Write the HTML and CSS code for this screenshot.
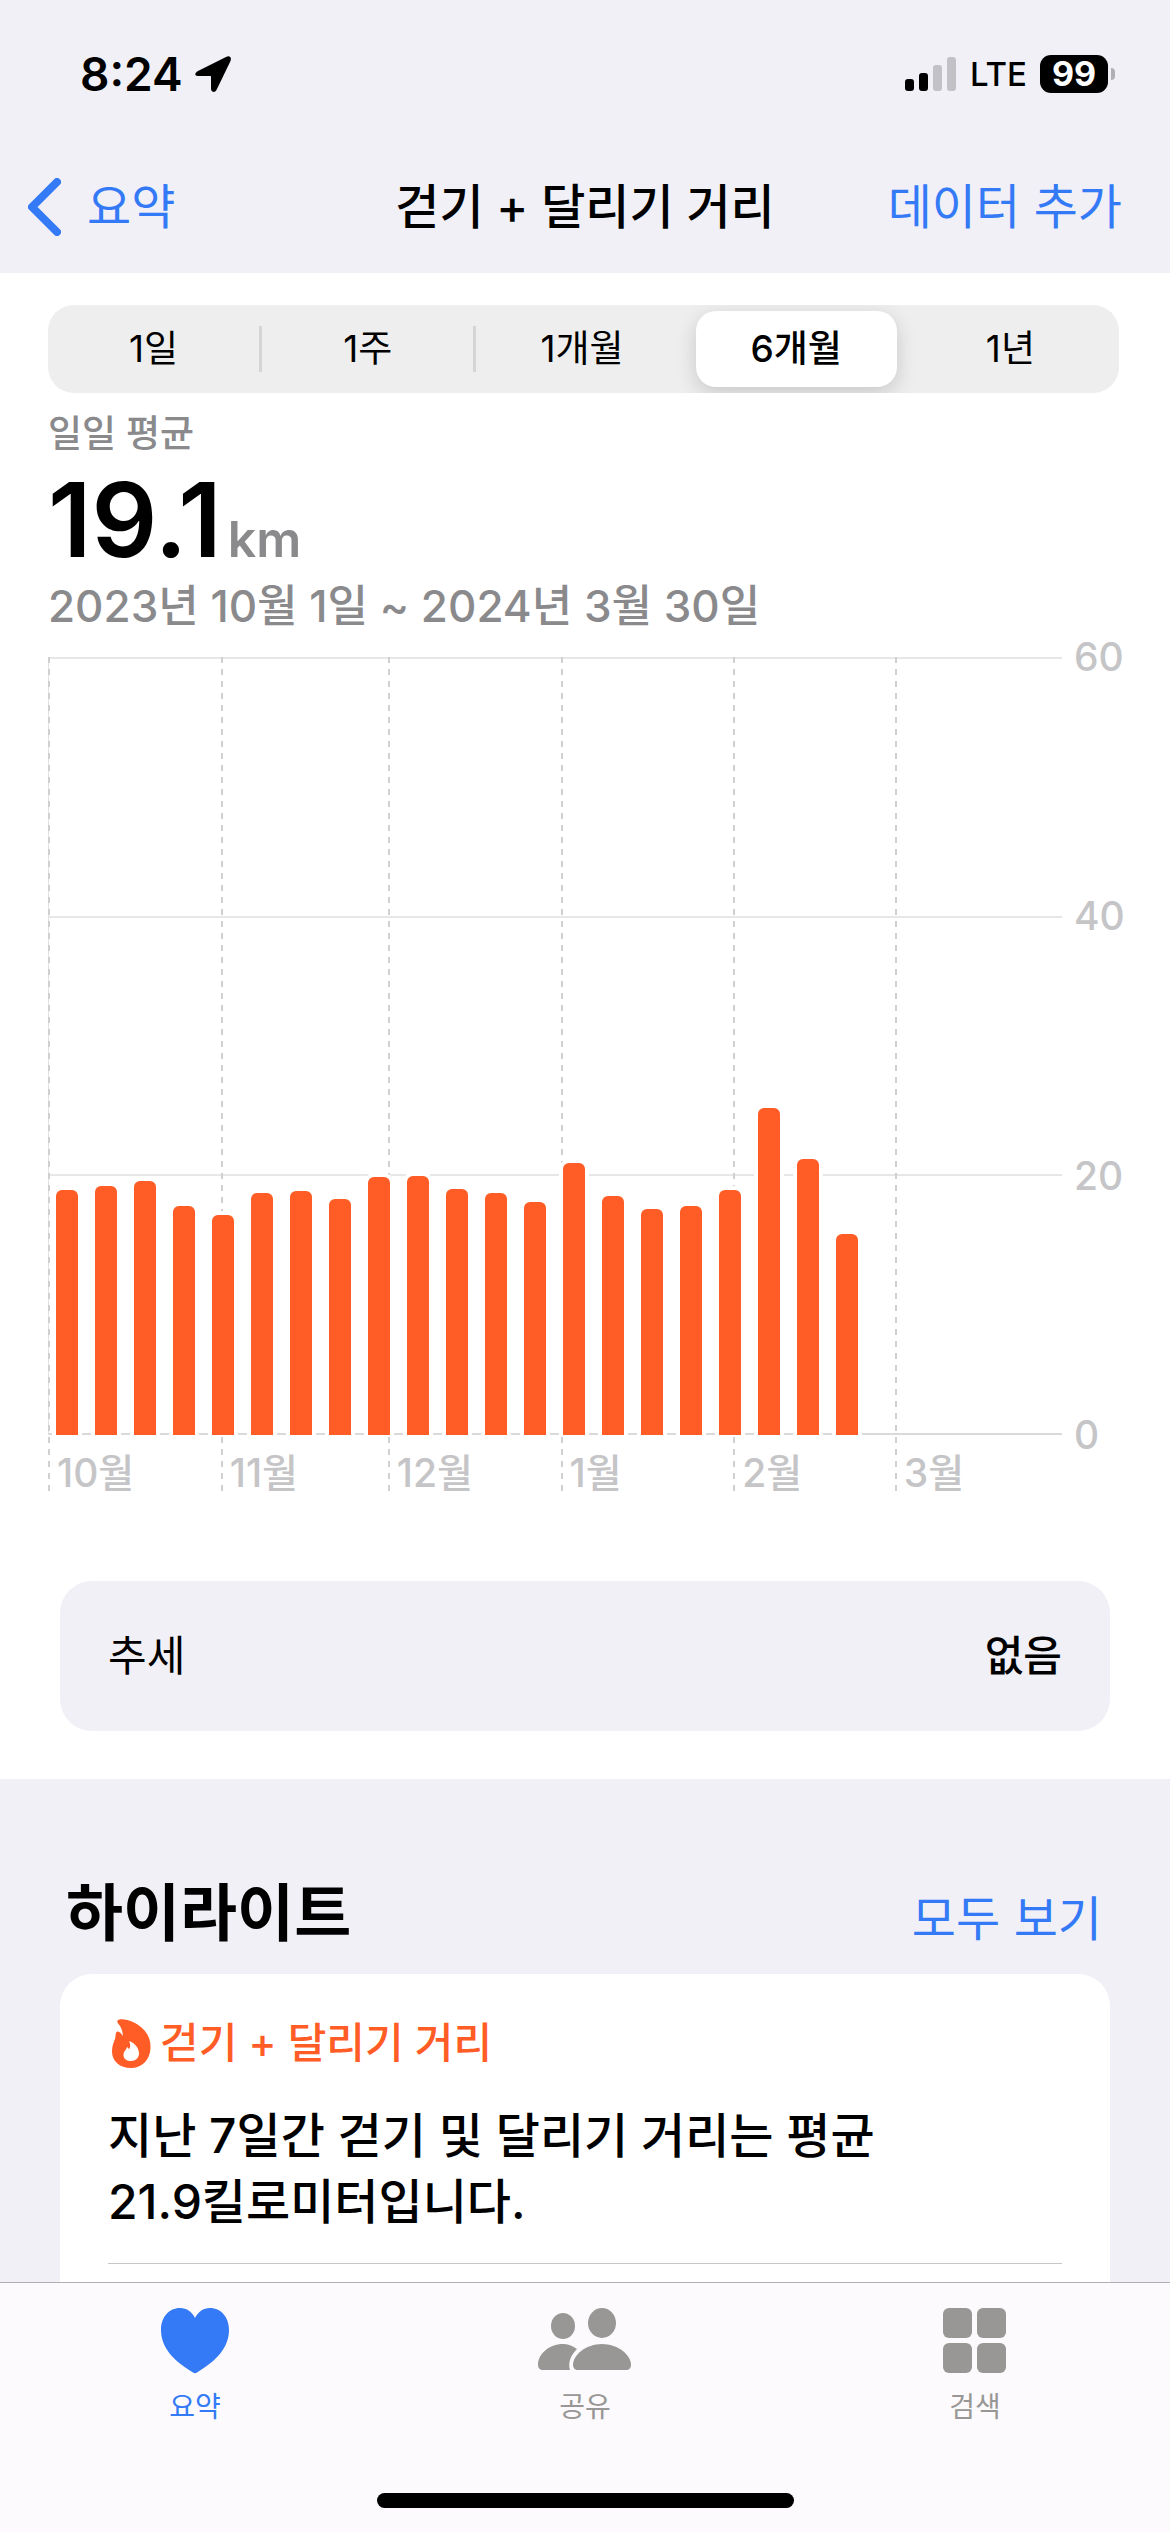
FILE: index.html
```html
<!DOCTYPE html>
<html lang="ko">
<head>
  <meta charset="UTF-8">
  <meta name="viewport" content="width=device-width, initial-scale=1.0">
  <title>걷기 + 달리기 거리</title>
  <link rel="stylesheet" href="styles.css">
</head>
<body>
  <header>
    <div class="status-bar">
      <div class="status-left">
        <span class="time">8:24</span>
        <svg width="36" height="36" viewBox="0 0 36 36">
          <path d="M31 1 2.500 15.200Q-.500 17 .500 19 1 20 3 20H15.500Q16 20 16 20.500V33Q16 35.500 18.500 36 20.500 36 21.500 34L35.500 5Q36.500 2 35 .700 33.500-.300 31 1Z"/>
        </svg>
      </div>
      <div class="status-right">
        <svg width="52" height="34" viewBox="0 0 52 34">
          <rect x="0" y="22" width="9" height="12" rx="3"/>
          <rect x="14" y="16" width="9" height="18" rx="3"/>
          <rect x="28" y="8" width="9" height="26" rx="3" fill="#c2c1c6"/>
          <rect x="42" y="0" width="9" height="34" rx="3" fill="#c2c1c6"/>
        </svg>
        <span class="network">LTE</span>
        <span class="battery">99</span>
      </div>
    </div>

    <nav class="nav-bar">
      <a href="#" class="back">
        <svg width="33" height="58" viewBox="0 0 33 58">
          <path d="M29 4 4 29 29 54" fill="none" stroke="#347af6" stroke-width="8" stroke-linecap="round" stroke-linejoin="round"/>
        </svg>
        요약
      </a>
      <h1>걷기 + 달리기 거리</h1>
      <a href="#" class="add">데이터 추가</a>
    </nav>
  </header>

  <main>
    <section class="panel">
      <div class="segments">
        <button type="button">1일</button>
        <button type="button">1주</button>
        <button type="button">1개월</button>
        <button type="button" class="selected">6개월</button>
        <button type="button">1년</button>
      </div>

      <div class="summary">
        <p class="summary-label">일일 평균</p>
        <p class="summary-value">19.1<span class="unit">km</span></p>
        <p class="summary-range">2023년 10월 1일 ~ 2024년 3월 30일</p>
      </div>

      <div class="chart">
        <div class="plot">
          <div class="grid-lines">
            <div></div>
            <div></div>
            <div></div>
          </div>
          <div class="months">
            <span>10월</span>
            <span>11월</span>
            <span>12월</span>
            <span>1월</span>
            <span>2월</span>
            <span>3월</span>
          </div>
          <!-- one bar per week, height = km out of 60 -->
          <div class="bars">
            <div style="--km: 18.9"></div>
            <div style="--km: 19.2"></div>
            <div style="--km: 19.6"></div>
            <div style="--km: 17.7"></div>
            <div style="--km: 17"></div>
            <div style="--km: 18.7"></div>
            <div style="--km: 18.8"></div>
            <div style="--km: 18.2"></div>
            <div style="--km: 19.9"></div>
            <div style="--km: 20"></div>
            <div style="--km: 19"></div>
            <div style="--km: 18.7"></div>
            <div style="--km: 18"></div>
            <div style="--km: 21"></div>
            <div style="--km: 18.4"></div>
            <div style="--km: 17.4"></div>
            <div style="--km: 17.7"></div>
            <div style="--km: 18.9"></div>
            <div style="--km: 25.2"></div>
            <div style="--km: 21.3"></div>
            <div style="--km: 15.5"></div>
          </div>
        </div>
        <div class="scale">
          <span>60</span>
          <span>40</span>
          <span>20</span>
          <span>0</span>
        </div>
      </div>

      <div class="trend">
        <span>추세</span>
        <strong>없음</strong>
      </div>
    </section>

    <section class="highlights">
      <div class="highlights-header">
        <h2>하이라이트</h2>
        <a href="#">모두 보기</a>
      </div>
      <article class="card">
        <h3>
          <svg width="39" height="49" viewBox="0 0 39 49">
            <path fill="#ff5c26" fill-rule="evenodd" d="M6 1C8-.300 15 0 22 3.500 32 8.500 39 17 38.500 29 38 41 30 49 19 49 8 49 0 42.500 0 32.500 0 27 1.500 24 3 20 4 17 3 14 5 12.700 7 12 9 14 10.700 17 11 12 9 8 6.500 5 5 3.500 5 2 6 1ZM17.500 23C18.500 26 18.500 28 17 30.500 16.500 29 16 28.500 15 28 14.500 31 11.500 32 11.500 36 11.500 40 15 42 19 42 23.500 42 27 39 27 34.500 27 29 23 24.500 18 22.200 17.300 22 17.200 22.500 17.500 23Z"/>
          </svg>
          걷기 + 달리기 거리
        </h3>
        <p>지난 7일간 걷기 및 달리기 거리는 평균<br>21.9킬로미터입니다.</p>
      </article>
    </section>
  </main>

  <nav class="tab-bar">
    <div class="tabs">
      <a href="#" class="active">
        <svg width="68" height="66" viewBox="0 0 68 66">
          <path d="M34 10C31 4 26 0 19 0 8 0 0 9 0 22 0 40 13 53 32 64.500Q34 66 36 64.500C55 53 68 40 68 22 68 9 60 0 49 0 42 0 37 4 34 10Z"/>
        </svg>
        요약
      </a>
      <a href="#">
        <svg width="94" height="66" viewBox="0 0 94 66">
          <ellipse cx="25" cy="18" rx="12" ry="13"/>
          <ellipse cx="64" cy="15" rx="14" ry="15"/>
          <path d="M39 41C34 37.500 30 36 25 36 11 36 0 46 0 57 0 60 2 62 5 62H32C30 55 32 48 39 41Z"/>
          <path d="M64 36C48 36 35 47 35 57 35 60 37 62 40 62H88C91 62 93 60 93 57 93 47 80 36 64 36Z"/>
        </svg>
        공유
      </a>
      <a href="#">
        <svg width="64" height="66" viewBox="0 0 64 66">
          <rect x="0" y="0" width="29" height="30" rx="6"/>
          <rect x="34" y="0" width="29" height="30" rx="6"/>
          <rect x="0" y="35" width="29" height="30" rx="6"/>
          <rect x="34" y="35" width="29" height="30" rx="6"/>
        </svg>
        검색
      </a>
    </div>
    <div class="home-indicator"></div>
  </nav>
</body>
</html>
```
FILE: styles.css
```css
* {
  box-sizing: border-box;
  margin: 0;
  padding: 0;
}
body {
  display: flex;
  flex-direction: column;
  height: 100vh;
  overflow: hidden;
  font-family: Inter, "Noto Sans CJK KR", sans-serif;
  font-size: 48px;
  line-height: 66px;
  color: #000;
  background: #f1f0f6;
}
a {
  color: #347af6;
  text-decoration: none;
}
svg {
  display: block;
  flex: none;
}

/* Status bar */
.status-bar {
  display: flex;
  justify-content: space-between;
  align-items: center;
  height: 148px;
  padding: 0 54px 0 80px;
}
.status-left,
.status-right {
  display: flex;
  align-items: center;
}
.status-left {
  gap: 12px;
}
.status-right {
  gap: 13px;
}
.time {
  font-size: 46px;
  font-weight: 600;
}
.network {
  font-size: 33px;
  font-weight: 500;
}
.battery {
  position: relative;
  width: 68px;
  height: 38px;
  margin-right: 8px;
  border-radius: 11px;
  background: #000;
  color: #fff;
  font-size: 34px;
  font-weight: 700;
  line-height: 38px;
  text-align: center;
}
.battery::after {
  content: "";
  position: absolute;
  left: 71px;
  top: 13px;
  width: 4px;
  height: 12px;
  border-radius: 0 4px 4px 0;
  background: #b0b0b4;
}

/* Navigation */
.nav-bar {
  display: grid;
  grid-template-columns: 1fr auto 1fr;
  align-items: center;
  height: 125px;
  padding: 0 28px 8px;
}
.nav-bar h1 {
  font-size: 48px;
  font-weight: 500;
}
.back {
  display: flex;
  align-items: center;
  gap: 26px;
}
.add {
  margin-right: 20px;
  text-align: right;
}

main {
  display: flex;
  flex-direction: column;
  flex: 1;
  min-height: 0;
}
.panel {
  padding: 32px 51px 48px 48px;
  background: #fff;
}

.segments {
  display: grid;
  grid-template-columns: repeat(5, 1fr);
  height: 88px;
  padding: 6px 0;
  border-radius: 26px;
  background: #eee;
  overflow: hidden;
}
.segments button {
  position: relative;
  margin: 0 8px 0 5px;
  border: none;
  border-radius: 20px;
  background: none;
  font-family: inherit;
  font-size: 37px;
  font-weight: 400;
  line-height: 72px;
  color: #000;
}
.segments button:nth-child(-n+2)::after {
  content: "";
  position: absolute;
  right: -8px;
  top: 15px;
  width: 3px;
  height: 46px;
  background: #d5d5d6;
}
.segments .selected {
  background: #fff;
  font-weight: 500;
  box-shadow: 0 6px 20px rgba(0, 0, 0, 0.16);
}

.summary {
  color: #8a8a8d;
  font-weight: 500;
}
.summary-label {
  margin-top: 14px;
  font-size: 37px;
  line-height: 54px;
}
.summary-value {
  font-size: 103px;
  font-weight: 600;
  line-height: 118px;
  color: #000;
}
.unit {
  margin-left: 6px;
  font-size: 50px;
  line-height: 50px;
  color: #8a8a8d;
}
.summary-range {
  font-size: 44px;
  line-height: 54px;
}

/* Chart */
.chart {
  display: grid;
  grid-template-columns: 1fr 60px;
  margin: 24px -3px 84px 0;
  color: #c5c5c7;
  font-size: 39px;
  font-weight: 500;
}
.plot {
  display: grid;
  grid-template-rows: 778px 62px;
}
.grid-lines {
  grid-area: 1 / 1;
  display: grid;
  grid-template-rows: repeat(3, 1fr);
  border-bottom: 2px solid #dadadc;
  border-left: 1px solid #e2e2e4;
}
.grid-lines div {
  border-top: 2px solid #e7e7e8;
}
.months {
  grid-area: 1 / 1 / 3 / 2;
  display: grid;
  /* days in each month shown */
  grid-template-columns: 31fr 30fr 31fr 31fr 29fr 30fr;
}
.months span {
  display: flex;
  align-items: flex-end;
  padding-left: 9px;
  line-height: 48px;
  background: repeating-linear-gradient(#d0d0d2 0 6px, transparent 6px 12px) left / 2px 100% no-repeat;
}
.bars {
  grid-area: 1 / 1;
  display: grid;
  grid-template-columns: repeat(26, 1fr);
  align-items: end;
  z-index: 1;
}
.bars div {
  height: calc(var(--km) / 60 * 100%);
  margin: 0 9px 0 8px;
  border-radius: 6px 6px 0 0;
  background: #ff5c26;
  box-shadow: 0 0 0 4px #fff;
  clip-path: inset(-4px -4px 0 -4px);
}
.scale {
  display: flex;
  flex-direction: column;
  justify-content: space-between;
  height: 838px;
  margin-top: -30px;
  padding-left: 12px;
  line-height: 60px;
}

.trend {
  display: flex;
  justify-content: space-between;
  align-items: center;
  height: 150px;
  margin: 0 9px 0 12px;
  padding: 0 48px;
  border-radius: 32px;
  background: #f1f0f6;
  font-size: 42px;
}
.trend strong {
  font-weight: 500;
}

/* Highlights */
.highlights {
  display: flex;
  flex-direction: column;
  flex: 1;
  padding: 90px 60px 0;
}
.highlights-header {
  display: flex;
  justify-content: space-between;
  align-items: baseline;
  padding: 0 8px 15px 6px;
}
.highlights h2 {
  font-size: 62px;
  font-weight: 700;
  line-height: 90px;
}
.card {
  flex: 1;
  padding: 36px 48px 0;
  border-radius: 32px 32px 0 0;
  background: #fff;
}
.card h3 {
  display: flex;
  align-items: center;
  gap: 9px;
  padding-left: 4px;
  font-size: 42px;
  font-weight: 500;
  color: #ff5c26;
}
.card p {
  padding: 27px 0 28px;
  border-bottom: 1px solid #c6c6c8;
  font-weight: 500;
}

/* Tab bar */
.tab-bar {
  height: 250px;
  padding-top: 25px;
  border-top: 1px solid #b0b0b2;
  background: #fcfafc;
}
.tabs {
  display: grid;
  grid-template-columns: repeat(3, 1fr);
}
.tabs a {
  display: flex;
  flex-direction: column;
  align-items: center;
  gap: 12px;
  font-size: 28px;
  line-height: 42px;
  color: #989795;
}
.tabs .active {
  color: #347af6;
}
.tabs svg {
  fill: currentColor;
}
.home-indicator {
  width: 417px;
  height: 15px;
  margin: 65px auto 0;
  border-radius: 8px;
  background: #000;
}
```
